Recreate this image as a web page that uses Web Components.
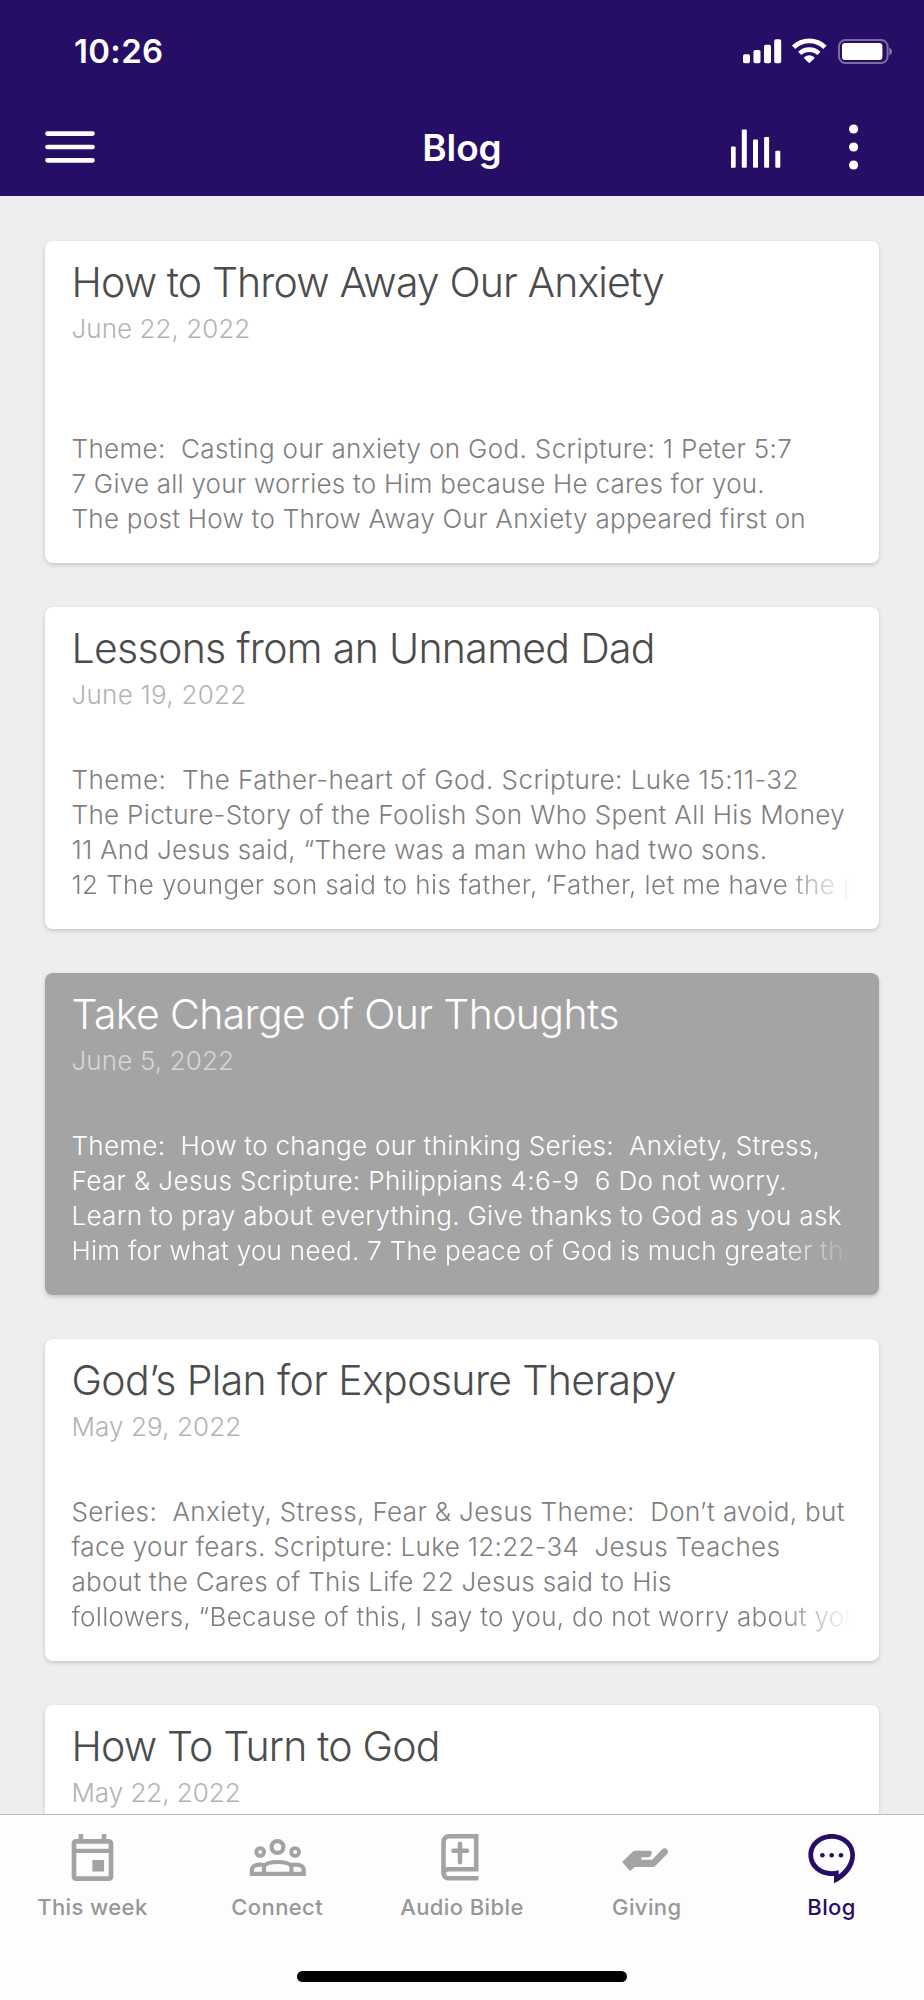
<!DOCTYPE html>
<html lang="en">
<head>
<meta charset="utf-8">
<title>Blog</title>
<style>
    html,body{
        margin: 0;
        padding: 0;
    }
    body{
        width: 924px;
        height: 2000px;
        overflow: hidden;
        font-family: Inter, "Liberation Sans", sans-serif;
        --brand: #260e66;
        --muted: #a3a3a3;
    }
</style>
</head>
<body>
<mobile-app>
    <status-bar slot="top" time="10:26"></status-bar>
    <nav-bar slot="top">Blog</nav-bar>

    <blog-card>
        <span slot="title" style="letter-spacing:-.88px">How to Throw Away Our Anxiety</span>
        <span slot="date" style="letter-spacing:.04px">June 22, 2022</span>
        <p style="letter-spacing:.36px">Theme:  Casting our anxiety on God. Scripture: 1 Peter 5:7</p>
        <p style="letter-spacing:.236px">7 Give all your worries to Him because He cares for you.</p>
        <p style="letter-spacing:.28px">The post How to Throw Away Our Anxiety appeared first on</p>
    </blog-card>

    <blog-card>
        <span slot="title" style="letter-spacing:-.68px">Lessons from an Unnamed Dad</span>
        <span slot="date" style="letter-spacing:.27px">June 19, 2022</span>
        <p style="letter-spacing:.47px">Theme:  The Father-heart of God. Scripture: Luke 15:11-32</p>
        <p style="letter-spacing:.35px">The Picture-Story of the Foolish Son Who Spent All His Money</p>
        <p style="letter-spacing:.27px">11 And Jesus said, “There was a man who had two sons.</p>
        <p class="fade" style="letter-spacing:.38px">12 The younger son said to his father, ‘Father, let me have the p</p>
    </blog-card>

    <blog-card theme="grey">
        <span slot="title" style="letter-spacing:-.63px">Take Charge of Our Thoughts</span>
        <span slot="date" style="letter-spacing:.13px">June 5, 2022</span>
        <p style="letter-spacing:.295px">Theme:  How to change our thinking Series:  Anxiety, Stress,</p>
        <p style="letter-spacing:.395px">Fear &amp; Jesus Scripture: Philippians 4:6-9  6 Do not worry.</p>
        <p style="letter-spacing:.31px">Learn to pray about everything. Give thanks to God as you ask</p>
        <p class="fade" style="letter-spacing:.28px">Him for what you need. 7 The peace of God is much greater tha</p>
    </blog-card>

    <blog-card>
        <span slot="title" style="letter-spacing:-.63px">God’s Plan for Exposure Therapy</span>
        <span slot="date" style="letter-spacing:.1px">May 29, 2022</span>
        <p style="letter-spacing:.37px">Series:  Anxiety, Stress, Fear &amp; Jesus Theme:  Don’t avoid, but</p>
        <p style="letter-spacing:.31px">face your fears. Scripture: Luke 12:22-34  Jesus Teaches</p>
        <p style="letter-spacing:.31px">about the Cares of This Life 22 Jesus said to His</p>
        <p class="fade" style="letter-spacing:.28px">followers, “Because of this, I say to you, do not worry about you</p>
    </blog-card>

    <blog-card>
        <span slot="title" style="letter-spacing:-.82px">How To Turn to God</span>
        <span slot="date" style="letter-spacing:-.04px">May 22, 2022</span>
    </blog-card>

    <tab-bar slot="bottom">
        <tab-item icon="calendar">This week</tab-item>
        <tab-item icon="people">Connect</tab-item>
        <tab-item icon="bible">Audio Bible</tab-item>
        <tab-item icon="hand">Giving</tab-item>
        <tab-item icon="chat" active>Blog</tab-item>
    </tab-bar>
</mobile-app>

<script>
const ICONS = {
    calendar: `
        <rect x="12" y="10.3" width="37" height="37.4" rx="2" fill="none" stroke="currentColor" stroke-width="4.7"/>
        <path d="M16.6 3h4.6v6h-4.6zM39.7 3h4.6v6h-4.6zM12 17.8h37v4.2H12zM30.4 29H42v11.4H30.4z" fill="currentColor"/>`,
    people: `
        <g fill="none" stroke="currentColor" stroke-width="4.2">
            <circle cx="30.5" cy="16" r="5.9" stroke-width="4.3"/>
            <circle cx="13.2" cy="21" r="3.9" stroke-width="3.9"/>
            <circle cx="48.1" cy="21" r="3.9" stroke-width="3.9"/>
            <path d="M17 43v-8C19 32.400 25 31 30.700 31s11.700 1.400 13.700 4v8"/>
            <path d="M17.500 34C16 33.700 14.500 33.600 13 33.600c-4.800 0-8.100 2-8.100 5.200v4h51.800v-4c0-3.200-3.300-5.200-8.100-5.200-1.500 0-3 .1-4.500.4"/>
        </g>`,
    bible: `
        <path d="M46.5 47.3H16.2a4.5 4.5 0 0 1 0-9H44.2V5.3H17.2a5.700 5.700 0 0 0-5.700 5.700v32" fill="none" stroke="currentColor" stroke-width="4.6"/>
        <path d="M28 12.8v18.5M21.4 19.8H35" fill="none" stroke="currentColor" stroke-width="4.5" stroke-linecap="round"/>`,
    hand: `
        <path transform="translate(-.8 0)" d="M5.9 30.9 16.5 20.7q1.3-1 3-1H34q1.6 0 1.6 1.6c0 3.3-1.6 5-4.1 5h-6.3v2.5H36l9.8-10.3q2.5-2.2 4.7-.5 2.5 2.5.3 5L39.6 34.6q-1.3 1.3-3 1.3H18.5L13.9 40z" fill="currentColor"/>`,
    chat: `
        <path d="M29.7 3C42.6 3 53 12 53 24c0 12.5-9 22.800-21 28.200V45h-2.300C16.800 45 6.400 36 6.400 24S16.800 3 29.700 3zM29.700 7.800C19.500 7.800 11.100 15 11.100 24s8.400 16.200 18.600 16.200c2.500 0 4.800-.3 7-.9v4.200C43.500 38 48.300 31.500 48.300 24c0-9-8.300-16.200-18.600-16.200z" fill="currentColor" fill-rule="evenodd"/>
        <g fill="currentColor"><circle cx="20.4" cy="24.2" r="2.3"/><circle cx="29.7" cy="24.2" r="2.3"/><circle cx="39" cy="24.2" r="2.3"/></g>`
};

class MobileApp extends HTMLElement{
    constructor(){
        super();
        this.attachShadow({mode:"open"}).innerHTML = `
            <style>
            :host{
                display: flex;
                flex-direction: column;
                height: 2000px;
                background-color: #eeeeee;
            }
            header{
                background-color: var(--brand);
                height: 196px;
            }
            main{
                flex: 1;
                min-height: 0;
                overflow: hidden;
                display: flex;
                flex-direction: column;
                gap: 44.6px;
                padding: 45px 45px 0;
            }
            </style>
            <header><slot name="top"></slot></header>
            <main><slot></slot></main>
            <slot name="bottom"></slot>
        `;
    }
}
customElements.define("mobile-app",MobileApp);

class StatusBar extends HTMLElement{
    constructor(){
        super();
        this.selector = this.attachShadow({mode:"open"})
    }

    connectedCallback(){
        this.selector.innerHTML = `
            <style>
            :host{
                display: flex;
                align-items: center;
                justify-content: space-between;
                box-sizing: border-box;
                height: 102px;
                padding: 0 32px 0 74px;
                color: #fff;
            }
            .time{
                font-size: 33px;
                font-weight: 600;
                letter-spacing: .3px;
            }
            svg{
                display: block;
            }
            </style>
            <div class="time">${this.getAttribute("time")}</div>
            <svg width="150" height="26" viewBox="0 0 150 26" fill="#fff">
                <rect x="1" y="16.3" width="7" height="9" rx="1.8"/>
                <rect x="11.5" y="12" width="7" height="13.3" rx="1.8"/>
                <rect x="22" y="6.7" width="7" height="18.6" rx="1.8"/>
                <rect x="32.2" y="1.3" width="7" height="24" rx="1.8"/>
                <path d="M67.3 25.3l-5-4.9q-.6-.7.2-1.3a7.8 7.8 0 0 1 9.6 0q.8.6.2 1.3z"/>
                <path d="M57.7 15.4a14 14 0 0 1 19.2 0" fill="none" stroke="#fff" stroke-width="4.6"/>
                <path d="M51.6 9.2a22.7 22.7 0 0 1 31.4 0" fill="none" stroke="#fff" stroke-width="4.8"/>
                <rect x="97" y="2" width="48.6" height="23" rx="6.5" fill="none" stroke="#fff" stroke-opacity=".4" stroke-width="2"/>
                <rect x="100" y="5" width="40.4" height="17" rx="3"/>
                <path d="M147.3 9.5q2.7 1.2 2.7 4t-2.7 4z" opacity=".45"/>
            </svg>
        `;
    }
}
customElements.define("status-bar",StatusBar);

class NavBar extends HTMLElement{
    constructor(){
        super();
        this.attachShadow({mode:"open"}).innerHTML = `
            <style>
            :host{
                display: grid;
                grid-template-columns: 1fr auto 1fr;
                align-items: center;
                box-sizing: border-box;
                height: 94px;
                padding: 0 65px 4px 45px;
                color: #fff;
            }
            .title{
                font-size: 37px;
                font-weight: 600;
                margin-left: 20px;
                letter-spacing: -.1px;
            }
            .actions{
                display: flex;
                justify-content: flex-end;
                align-items: center;
                gap: 68px;
            }
            svg{
                display: block;
            }
            </style>
            <svg width="51" height="34" viewBox="0 0 51 34" stroke="#fff" stroke-width="4.7" stroke-linecap="round">
                <path d="M2.5 3.6h45M2.5 17h45M2.5 30.3h45"/>
            </svg>
            <div class="title"><slot></slot></div>
            <div class="actions">
                <svg width="50" height="46" viewBox="0 0 50 46" fill="#fff">
                    <rect x="-.3" y="22.5" width="5" height="21.2" rx="1"/>
                    <rect x="10.8" y="5.5" width="5" height="38.2" rx="1"/>
                    <rect x="22" y="15.5" width="5" height="28.2" rx="1"/>
                    <rect x="33.1" y="13" width="5" height="30.7" rx="1"/>
                    <rect x="44.3" y="26.7" width="5" height="17" rx="1"/>
                </svg>
                <svg width="10" height="46" viewBox="0 0 10 46" fill="#fff">
                    <circle cx="4.6" cy="5" r="4.6"/>
                    <circle cx="4.6" cy="23" r="4.6"/>
                    <circle cx="4.6" cy="41" r="4.6"/>
                </svg>
            </div>
        `;
    }
}
customElements.define("nav-bar",NavBar);

class BlogCard extends HTMLElement{
    constructor(){
        super();
        this.attachShadow({mode:"open"}).innerHTML = `
            <style>
            :host{
                display: flex;
                flex-direction: column;
                flex: none;
                box-sizing: border-box;
                height: 321.5px;
                padding: 18px 0 26.5px 26.5px;
                border-radius: 8px;
                background-color: #fff;
                box-shadow: 0 2px 4px rgba(0,0,0,0.17);
                font-weight: 300;
                white-space: pre;
                --title: #4c4c4c;
                --date: #b3b3b3;
                --text: #7e7e7e;
            }
            :host([theme="grey"]){
                background-color: #a4a4a4;
                --title: #fff;
                --date: #d6d6d6;
                --text: #fff;
            }
            .title{
                font-size: 41px;
                line-height: 46px;
                color: var(--title);
            }
            .date{
                margin-top: 8px;
                font-size: 26px;
                line-height: 32px;
                color: var(--date);
            }
            .text{
                margin-top: auto;
                font-size: 26px;
                line-height: 35px;
                color: var(--text);
            }
            ::slotted(p){
                margin: 0;
            }
            ::slotted(.fade){
                -webkit-mask-image: linear-gradient(to right, #000 705px, transparent 780px);
                mask-image: linear-gradient(to right, #000 705px, transparent 780px);
            }
            </style>
            <div class="title"><slot name="title"></slot></div>
            <div class="date"><slot name="date"></slot></div>
            <div class="text"></div>
        `;
    }

    connectedCallback(){
        const slot = document.createElement("slot");
        // whitespace between the paragraphs would show up because of white-space: pre
        [...this.childNodes].forEach(n => { if(n.nodeType == 3) n.remove(); });
        this.shadowRoot.querySelector(".text").replaceChildren(slot);
    }
}
customElements.define("blog-card",BlogCard);

class TabItem extends HTMLElement{
    constructor(){
        super();
        this.selector = this.attachShadow({mode:"open"})
    }

    connectedCallback(){
        this.selector.innerHTML = `
            <style>
            :host{
                display: flex;
                flex-direction: column;
                align-items: center;
                flex: 1 1 0;
                color: var(--muted);
            }
            :host([active]){
                color: var(--brand);
            }
            svg{
                display: block;
            }
            .label{
                margin-top: 8.5px;
                font-size: 22px;
                line-height: 28px;
                font-weight: 500;
                letter-spacing: .4px;
                white-space: nowrap;
                color: #979797;
            }
            :host([active]) .label{
                color: inherit;
            }
            </style>
            <svg width="60" height="54" viewBox="0 0 60 54">${ICONS[this.getAttribute("icon")]}</svg>
            <div class="label"><slot></slot></div>
        `;
    }
}
customElements.define("tab-item",TabItem);

class TabBar extends HTMLElement{
    constructor(){
        super();
        this.attachShadow({mode:"open"}).innerHTML = `
            <style>
            :host{
                display: flex;
                flex-direction: column;
                justify-content: space-between;
                align-items: center;
                box-sizing: border-box;
                height: 186px;
                padding: 15.5px 0 18px;
                border-top: 1px solid #bcbcbc;
                background-color: #fdfdfd;
            }
            .tabs{
                display: flex;
                width: 100%;
            }
            .home{
                width: 330px;
                height: 11px;
                border-radius: 6px;
                background-color: #000;
            }
            </style>
            <div class="tabs"><slot></slot></div>
            <div class="home"></div>
        `;
    }
}
customElements.define("tab-bar",TabBar);
</script>
</body>
</html>
